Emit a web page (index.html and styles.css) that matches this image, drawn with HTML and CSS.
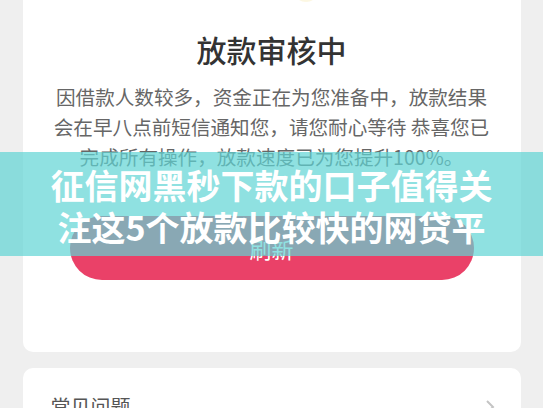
FILE: index.html
```html
<!DOCTYPE html>
<html lang="zh-CN">
<head>
    <meta charset="UTF-8">
    <meta name="viewport" content="width=device-width, initial-scale=1.0">
    <title>放款审核中</title>
    <link rel="stylesheet" href="styles.css">
</head>
<body>
    <div class="page">
        <div class="status-card">
            <div class="status-icon"></div>
            <h1>放款审核中</h1>
            <p class="status-text">
                因借款人数较多，资金正在为您准备中，放款结果<br>
                会在早八点前短信通知您，请您耐心等待 恭喜您已<br>
                完成所有操作，放款速度已为您提升100%。
            </p>
            <button class="refresh-btn">刷新</button>
        </div>

        <div class="faq-card">
            <span>常见问题</span>
            <svg class="chevron" width="10" height="16" viewBox="0 0 10 16">
                <path d="M2 2 L8 8 L2 14" fill="none" stroke="#c4c4c4" stroke-width="2"/>
            </svg>
        </div>
    </div>

    <div class="banner">
        <p>征信网黑秒下款的口子值得关</p>
        <p>注这5个放款比较快的网贷平</p>
    </div>
</body>
</html>
```

FILE: styles.css
```css
body {
    margin: 0;
    background-color: #efefef;
    font-family: "Noto Sans CJK SC", "Noto Sans", sans-serif;
}
.page {
    width: 498px;
    margin: -60px auto 0;
}
.status-card {
    background-color: #fff;
    border-radius: 0 0 10px 10px;
    padding: 0 0 72px;
    text-align: center;
}
.status-icon {
    width: 26px;
    height: 62px;
    margin: 0 auto;
    position: relative;
    left: 34px;
    background-color: #fbf4d6;
    border-radius: 0 0 13px 13px;
    opacity: 0.7;
}
.status-card h1 {
    margin: 0;
    padding-top: 26px;
    font-size: 30px;
    font-weight: 500;
    line-height: 42px;
    color: #333;
}
.status-text {
    margin: 12px 0 0;
    font-size: 19.6px;
    line-height: 30px;
    color: #666;
    white-space: nowrap;
}
.refresh-btn {
    display: block;
    width: 404px;
    height: 64px;
    margin: 44px auto 0;
    border: none;
    border-radius: 32px;
    background-color: #ea4168;
    color: #fff;
    font-family: inherit;
    font-size: 22px;
    line-height: 60px;
}
.faq-card {
    margin-top: 16px;
    background-color: #fff;
    border-radius: 10px;
    padding: 24px 26px 40px 28px;
    display: flex;
    justify-content: space-between;
    align-items: center;
    font-size: 20px;
    color: #555;
}
.banner {
    position: absolute;
    top: 152px;
    left: 0;
    width: 100%;
    height: 104px;
    background-color: rgba(95, 212, 212, 0.7);
    text-align: center;
    color: #fff;
    font-weight: 700;
    font-size: 34px;
    line-height: 42px;
    padding-top: 12px;
    box-sizing: border-box;
}
.banner p {
    margin: 0;
}
```
